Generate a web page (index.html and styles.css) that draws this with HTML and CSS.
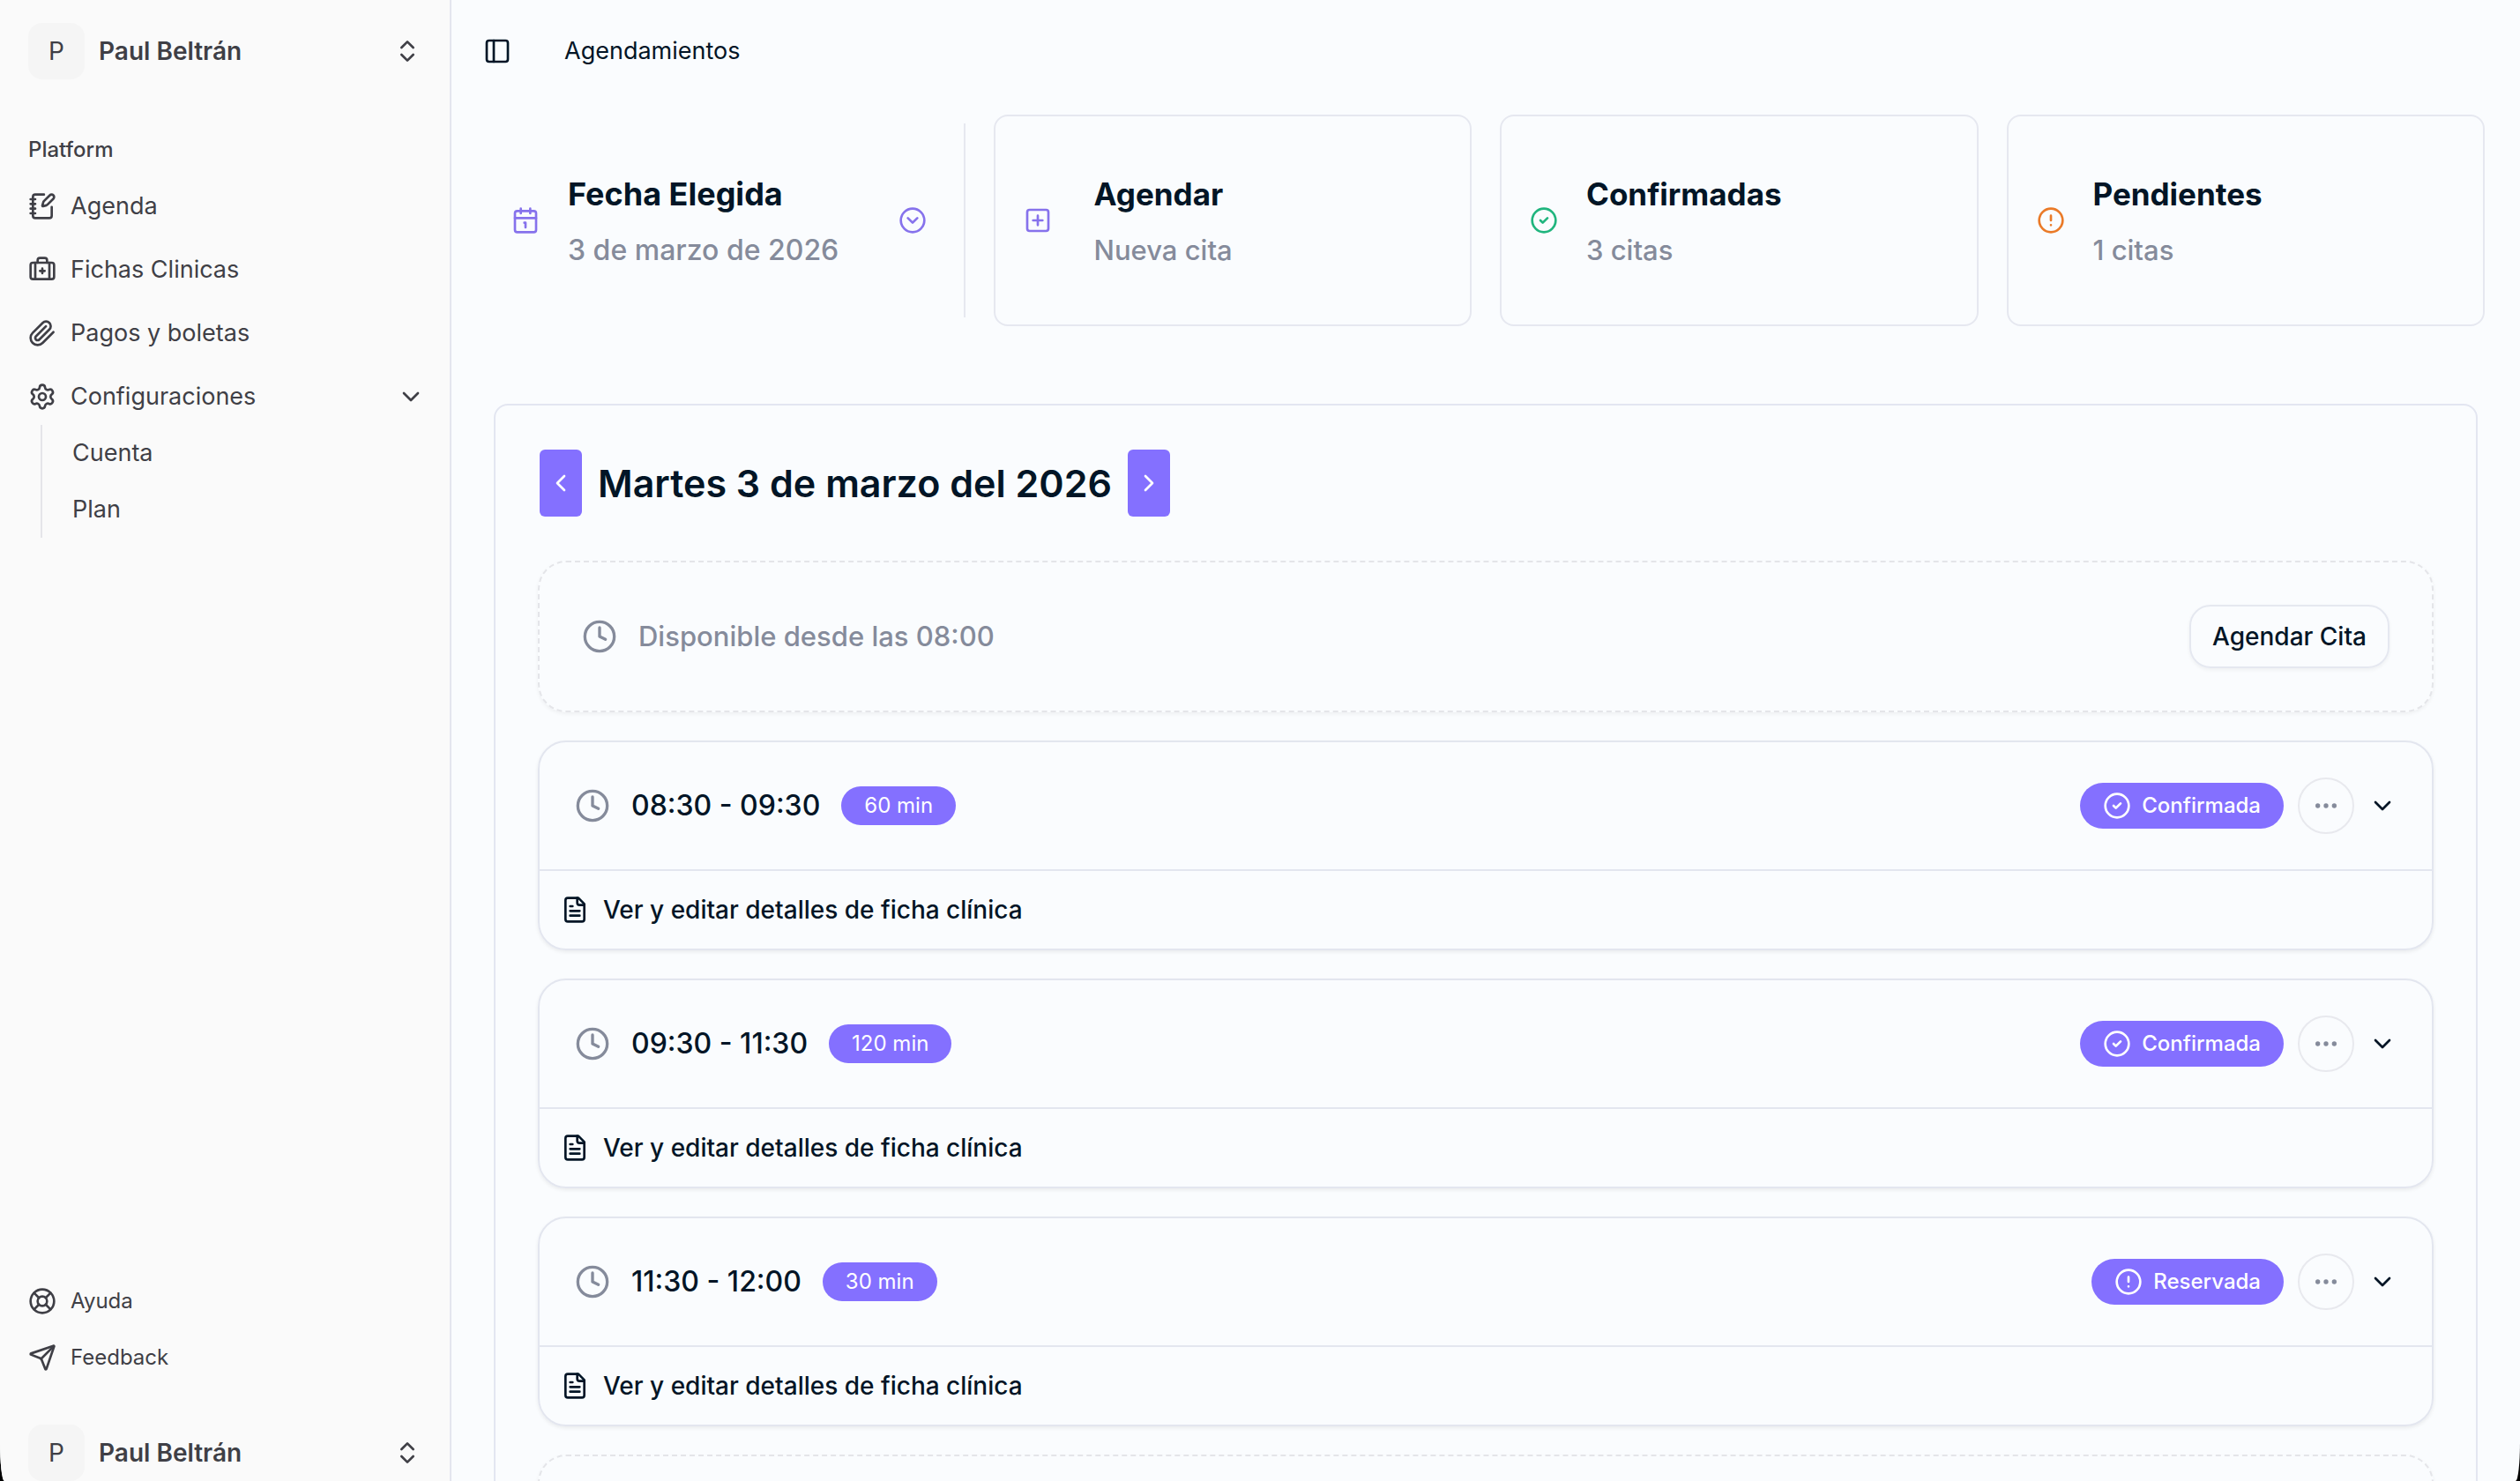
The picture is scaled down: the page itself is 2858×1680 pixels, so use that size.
FILE: index.html
```html
<!DOCTYPE html>
<html lang="es">
<head>
    <meta charset="UTF-8">
    <meta name="viewport" content="width=device-width, initial-scale=1.0">
    <title>Agendamientos</title>
    <link rel="stylesheet" href="styles.css">
</head>
<body>
    <!-- Iconos -->
    <svg class="sprite" aria-hidden="true">
        <symbol id="chevrons" viewBox="0 0 24 24"><path d="m7 15 5 5 5-5"/><path d="m7 9 5-5 5 5"/></symbol>
        <symbol id="chevron-down" viewBox="0 0 24 24"><path d="m6 9 6 6 6-6"/></symbol>
        <symbol id="chevron-left" viewBox="0 0 24 24"><path d="m15 18-6-6 6-6"/></symbol>
        <symbol id="chevron-right" viewBox="0 0 24 24"><path d="m9 18 6-6-6-6"/></symbol>
        <symbol id="notebook" viewBox="0 0 24 24"><path d="M13.4 2H6a2 2 0 0 0-2 2v16a2 2 0 0 0 2 2h12a2 2 0 0 0 2-2v-7.4"/><path d="M2 6h4M2 10h4M2 14h4M2 18h4"/><path d="M21.378 5.626a1 1 0 1 0-3.004-3.004l-5.01 5.012a2 2 0 0 0-.506.854l-.837 2.87a.5.5 0 0 0 .62.62l2.87-.837a2 2 0 0 0 .854-.506z"/></symbol>
        <symbol id="briefcase" viewBox="0 0 24 24"><path d="M12 11v4M14 13h-4M16 6V4a2 2 0 0 0-2-2h-4a2 2 0 0 0-2 2v2M18 6v14M6 6v14"/><rect width="20" height="14" x="2" y="6" rx="2"/></symbol>
        <symbol id="paperclip" viewBox="0 0 24 24"><path d="m21.44 11.05-9.19 9.19a6 6 0 0 1-8.49-8.49l8.57-8.57A4 4 0 1 1 18 8.84l-8.59 8.57a2 2 0 0 1-2.83-2.83l8.49-8.48"/></symbol>
        <symbol id="settings" viewBox="0 0 24 24"><path d="M9.671 4.136a2.34 2.34 0 0 1 4.659 0 2.34 2.34 0 0 0 3.319 1.915 2.34 2.34 0 0 1 2.33 4.033 2.34 2.34 0 0 0 0 3.831 2.34 2.34 0 0 1-2.33 4.033 2.34 2.34 0 0 0-3.319 1.915 2.34 2.34 0 0 1-4.659 0 2.34 2.34 0 0 0-3.32-1.915 2.34 2.34 0 0 1-2.33-4.033 2.34 2.34 0 0 0 0-3.831A2.34 2.34 0 0 1 6.35 6.051a2.34 2.34 0 0 0 3.319-1.915"/><circle cx="12" cy="12" r="3"/></symbol>
        <symbol id="life-buoy" viewBox="0 0 24 24"><circle cx="12" cy="12" r="10"/><path d="m4.93 4.93 4.24 4.24M14.83 9.17l4.24-4.24M14.83 14.83l4.24 4.24M9.17 14.83l-4.24 4.24"/><circle cx="12" cy="12" r="4"/></symbol>
        <symbol id="send" viewBox="0 0 24 24"><path d="M14.536 21.686a.5.5 0 0 0 .937-.024l6.5-19a.496.496 0 0 0-.635-.635l-19 6.5a.5.5 0 0 0-.024.937l7.93 3.18a2 2 0 0 1 1.112 1.11z"/><path d="m21.854 2.147-10.94 10.939"/></symbol>
        <symbol id="panel" viewBox="0 0 24 24"><rect width="18" height="18" x="3" y="3" rx="2"/><path d="M9 3v18"/></symbol>
        <symbol id="calendar" viewBox="0 0 24 24"><path d="M11 14h1v4M16 2v4M3 10h18M8 2v4"/><rect width="18" height="18" x="3" y="4" rx="2"/></symbol>
        <symbol id="circle-down" viewBox="0 0 24 24"><circle cx="12" cy="12" r="10"/><path d="m16 10-4 4-4-4"/></symbol>
        <symbol id="square-plus" viewBox="0 0 24 24"><rect width="18" height="18" x="3" y="3" rx="2"/><path d="M8 12h8M12 8v8"/></symbol>
        <symbol id="circle-check" viewBox="0 0 24 24"><circle cx="12" cy="12" r="10"/><path d="m9 12 2 2 4-4"/></symbol>
        <symbol id="circle-alert" viewBox="0 0 24 24"><circle cx="12" cy="12" r="10"/><path d="M12 8v4M12 16h.01"/></symbol>
        <symbol id="clock" viewBox="0 0 24 24"><circle cx="12" cy="12" r="10"/><path d="M12 6v6l4 2"/></symbol>
        <symbol id="dots" viewBox="0 0 24 24"><circle cx="5" cy="12" r="1"/><circle cx="12" cy="12" r="1"/><circle cx="19" cy="12" r="1"/></symbol>
        <symbol id="file" viewBox="0 0 24 24"><path d="M15 2H6a2 2 0 0 0-2 2v16a2 2 0 0 0 2 2h12a2 2 0 0 0 2-2V7Z"/><path d="M14 2v4a2 2 0 0 0 2 2h4M10 9H8M16 13H8M16 17H8"/></symbol>
    </svg>

    <div class="app">
        <aside class="sidebar">
            <button type="button" class="user">
                <span class="avatar">P</span>
                <span class="user-name">Paul Beltrán</span>
                <svg class="icon"><use href="#chevrons"/></svg>
            </button>

            <nav class="nav">
                <div class="nav-label">Platform</div>
                <a href="#" class="nav-link"><svg class="icon"><use href="#notebook"/></svg>Agenda</a>
                <a href="#" class="nav-link"><svg class="icon"><use href="#briefcase"/></svg>Fichas Clinicas</a>
                <a href="#" class="nav-link"><svg class="icon"><use href="#paperclip"/></svg>Pagos y boletas</a>
                <button type="button" class="nav-link">
                    <svg class="icon"><use href="#settings"/></svg>
                    <span class="grow">Configuraciones</span>
                    <svg class="icon"><use href="#chevron-down"/></svg>
                </button>
                <div class="subnav">
                    <a href="#">Cuenta</a>
                    <a href="#">Plan</a>
                </div>
            </nav>

            <nav class="nav nav-small">
                <a href="#" class="nav-link"><svg class="icon"><use href="#life-buoy"/></svg>Ayuda</a>
                <a href="#" class="nav-link"><svg class="icon"><use href="#send"/></svg>Feedback</a>
            </nav>

            <button type="button" class="user">
                <span class="avatar">P</span>
                <span class="user-name">Paul Beltrán</span>
                <svg class="icon"><use href="#chevrons"/></svg>
            </button>
        </aside>

        <main class="main">
            <header class="topbar">
                <button type="button" class="toggle" aria-label="Mostrar menú"><svg class="icon"><use href="#panel"/></svg></button>
                <span>Agendamientos</span>
            </header>

            <section class="stats">
                <button type="button" class="stat stat-date">
                    <svg class="icon purple"><use href="#calendar"/></svg>
                    <span class="stat-text">
                        <span class="stat-title">Fecha Elegida</span>
                        <span class="stat-sub">3 de marzo de 2026</span>
                    </span>
                    <svg class="icon purple"><use href="#circle-down"/></svg>
                </button>
                <button type="button" class="stat stat-new">
                    <svg class="icon purple"><use href="#square-plus"/></svg>
                    <span class="stat-text">
                        <span class="stat-title">Agendar</span>
                        <span class="stat-sub">Nueva cita</span>
                    </span>
                </button>
                <div class="stat">
                    <svg class="icon green"><use href="#circle-check"/></svg>
                    <div class="stat-text">
                        <span class="stat-title">Confirmadas</span>
                        <span class="stat-sub">3 citas</span>
                    </div>
                </div>
                <div class="stat">
                    <svg class="icon orange"><use href="#circle-alert"/></svg>
                    <div class="stat-text">
                        <span class="stat-title">Pendientes</span>
                        <span class="stat-sub">1 citas</span>
                    </div>
                </div>
            </section>

            <section class="panel">
                <div class="day">
                    <button type="button" class="day-btn" aria-label="Día anterior"><svg class="icon"><use href="#chevron-left"/></svg></button>
                    <h1>Martes 3 de marzo del 2026</h1>
                    <button type="button" class="day-btn" aria-label="Día siguiente"><svg class="icon"><use href="#chevron-right"/></svg></button>
                </div>

                <div class="slot">
                    <svg class="icon icon-lg"><use href="#clock"/></svg>
                    <span class="grow">Disponible desde las 08:00</span>
                    <button type="button" class="slot-btn">Agendar Cita</button>
                </div>

                <article class="cita">
                    <div class="cita-head">
                        <svg class="icon icon-lg"><use href="#clock"/></svg>
                        <span class="hora">08:30 - 09:30</span>
                        <span class="min">60 min</span>
                        <span class="estado"><svg class="icon"><use href="#circle-check"/></svg>Confirmada</span>
                        <button type="button" class="more" aria-label="Más opciones"><svg class="icon"><use href="#dots"/></svg></button>
                        <button type="button" class="toggle" aria-label="Ver detalle"><svg class="icon"><use href="#chevron-down"/></svg></button>
                    </div>
                    <a href="#" class="ficha"><svg class="icon"><use href="#file"/></svg>Ver y editar detalles de ficha clínica</a>
                </article>

                <article class="cita">
                    <div class="cita-head">
                        <svg class="icon icon-lg"><use href="#clock"/></svg>
                        <span class="hora">09:30 - 11:30</span>
                        <span class="min">120 min</span>
                        <span class="estado"><svg class="icon"><use href="#circle-check"/></svg>Confirmada</span>
                        <button type="button" class="more" aria-label="Más opciones"><svg class="icon"><use href="#dots"/></svg></button>
                        <button type="button" class="toggle" aria-label="Ver detalle"><svg class="icon"><use href="#chevron-down"/></svg></button>
                    </div>
                    <a href="#" class="ficha"><svg class="icon"><use href="#file"/></svg>Ver y editar detalles de ficha clínica</a>
                </article>

                <article class="cita">
                    <div class="cita-head">
                        <svg class="icon icon-lg"><use href="#clock"/></svg>
                        <span class="hora">11:30 - 12:00</span>
                        <span class="min">30 min</span>
                        <span class="estado"><svg class="icon"><use href="#circle-alert"/></svg>Reservada</span>
                        <button type="button" class="more" aria-label="Más opciones"><svg class="icon"><use href="#dots"/></svg></button>
                        <button type="button" class="toggle" aria-label="Ver detalle"><svg class="icon"><use href="#chevron-down"/></svg></button>
                    </div>
                    <a href="#" class="ficha"><svg class="icon"><use href="#file"/></svg>Ver y editar detalles de ficha clínica</a>
                </article>

                <div class="slot"></div>
            </section>
        </main>
    </div>
</body>
</html>
```
FILE: styles.css
```css
* {
    margin: 0;
    padding: 0;
    box-sizing: border-box;
}

html {
    background: #000;
}

body {
    font-family: Inter, "Liberation Sans", sans-serif;
    font-size: 28px;
    line-height: 40px;
    color: #021526;
}

button {
    font: inherit;
    color: inherit;
    background: none;
    border: none;
    text-align: left;
    cursor: pointer;
}

a {
    color: inherit;
    text-decoration: none;
}

.sprite {
    display: none;
}

.icon {
    flex: none;
    width: 32px;
    height: 32px;
    fill: none;
    stroke: currentColor;
    stroke-width: 2;
    stroke-linecap: round;
    stroke-linejoin: round;
}

.icon-lg {
    width: 40px;
    height: 40px;
    color: #858b9b;
}

.grow {
    flex: 1;
}

.purple { color: #8672ec; }
.green { color: #20b57e; }
.orange { color: #ea7a28; }

.app {
    display: flex;
    align-items: flex-start;
    height: 100vh;
    overflow: hidden;
    background: #fafcfe;
    border-radius: 0 0 5px 5px / 0 0 44px 44px;
}

/* Sidebar */
.sidebar {
    flex: none;
    display: flex;
    flex-direction: column;
    width: 512px;
    height: calc(100vh + 32px);
    padding: 10px 16px 16px;
    background: #fafafa;
    border-right: 2px solid #e4e6ef;
    color: #3f3f46;
}

.user {
    display: flex;
    align-items: center;
    gap: 16px;
    height: 96px;
    padding: 0 16px;
}

.avatar {
    width: 64px;
    height: 64px;
    line-height: 64px;
    border-radius: 16px;
    background: #f5f5f5;
    text-align: center;
}

.user-name {
    flex: 1;
    font-weight: 600;
}

.nav {
    flex: 1;
    padding: 32px 0 16px;
    font-size: 27px;
}

.nav-small {
    flex: none;
    padding: 16px 0 32px;
    font-size: 24px;
}

.nav-label {
    height: 64px;
    padding: 0 16px;
    line-height: 64px;
    font-size: 24px;
    font-weight: 500;
}

.nav-link {
    display: flex;
    align-items: center;
    gap: 16px;
    width: 100%;
    height: 64px;
    margin-bottom: 8px;
    padding: 0 12px 0 16px;
}

.nav-small .nav-link {
    height: 56px;
}

.nav-small .nav-link:last-child {
    margin-bottom: 0;
}

.subnav {
    margin: -8px 28px 0 30px;
    padding: 4px 0 4px 34px;
    border-left: 2px solid #e5e5e9;
}

.subnav a {
    display: block;
    height: 64px;
    line-height: 56px;
}

.subnav a:last-child {
    height: 56px;
}

/* Contenido */
.main {
    flex: 1;
    min-width: 0;
    padding: 0 40px;
}

.topbar {
    display: flex;
    align-items: center;
    gap: 60px;
    height: 116px;
    font-size: 27px;
}

.toggle {
    display: flex;
}

.topbar .toggle {
    margin-left: -4px;
}

.stats {
    display: grid;
    grid-template-columns: repeat(4, 1fr);
    gap: 32px;
    padding-top: 14px;
}

.stat {
    display: flex;
    align-items: center;
    gap: 32px;
    height: 240px;
    padding: 0 32px;
    border: 2px solid #e6e8f0;
    border-radius: 16px;
}

.stat-text {
    display: flex;
    flex-direction: column;
    gap: 16px;
    padding-top: 4px;
}

.stat-title {
    line-height: 48px;
    font-size: 35px;
    font-weight: 700;
}

.stat-sub {
    line-height: 48px;
    font-size: 31px;
    font-weight: 500;
    color: #858b9b;
}

.stat-date {
    height: 220px;
    margin: 10px 0;
    padding: 0 42px 0 28px;
    border-width: 0 2px 0 0;
    border-radius: 0;
}

.stat-date .stat-text {
    flex: 1;
}

.stat-date .stat-title {
    font-size: 36px;
}

.stat-date .stat-sub {
    font-size: 32px;
}

.stat-new {
    gap: 48px;
}

.panel {
    display: flex;
    flex-direction: column;
    gap: 32px;
    margin: 88px 8px 0;
    padding: 50px 48px;
    border: 2px solid #e3e6f1;
    border-radius: 16px;
}

.day {
    display: flex;
    align-items: center;
    gap: 18px;
    padding: 0 2px;
    margin-bottom: 18px;
}

.day-btn {
    display: flex;
    align-items: center;
    justify-content: center;
    width: 48px;
    height: 76px;
    border-radius: 6px;
    background: #8470ff;
    color: #fff;
}

h1 {
    font-size: 43px;
    font-weight: 600;
}

.slot {
    display: flex;
    align-items: center;
    gap: 24px;
    height: 172px;
    padding: 0 48px;
    border: 2px dashed #e4e5e9;
    border-radius: 32px;
    box-shadow: 0 2px 4px rgba(0, 0, 0, 0.05);
    font-size: 31px;
    font-weight: 500;
    color: #858b9b;
}

.slot-btn {
    height: 72px;
    padding: 0 24px;
    border: 2px solid #e5e8f0;
    border-radius: 24px;
    box-shadow: 0 2px 4px rgba(0, 0, 0, 0.05);
    font-size: 28px;
    color: #021526;
}

.cita {
    border: 2px solid #e3e6ef;
    border-radius: 32px;
    box-shadow: 0 2px 4px rgba(0, 0, 0, 0.07);
}

.cita-head {
    display: flex;
    align-items: center;
    gap: 16px;
    height: 146px;
    padding: 0 40px;
    border-bottom: 2px solid #e3e6ef;
}

.hora {
    margin: 0 8px;
    font-size: 32px;
    font-weight: 500;
}

.min {
    padding: 0 26px;
    line-height: 44px;
    border-radius: 22px;
    background: #8470ff;
    color: #fff;
    font-size: 24px;
}

.estado {
    display: flex;
    align-items: center;
    gap: 12px;
    height: 52px;
    margin-left: auto;
    padding: 0 26px;
    border-radius: 26px;
    background: #8470ff;
    color: #fff;
    font-size: 24px;
    font-weight: 500;
}

.more {
    display: flex;
    align-items: center;
    justify-content: center;
    width: 64px;
    height: 64px;
    border: 2px solid #e8e9ee;
    border-radius: 50%;
    color: #858b9b;
}

.ficha {
    display: flex;
    align-items: center;
    gap: 16px;
    height: 88px;
    padding: 0 24px;
    font-weight: 500;
}
```
